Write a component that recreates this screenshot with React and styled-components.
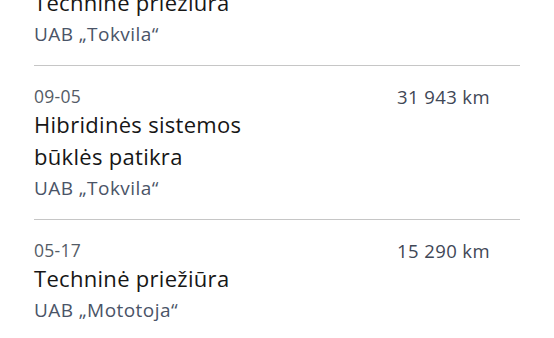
import React from "react";
import styled, { createGlobalStyle } from "styled-components";

const Global = createGlobalStyle`
  html, body { margin: 0; padding: 0; background: #ffffff; }
  body { font-family: "Open Sans", "Noto Sans", sans-serif; overflow: hidden; }
`;

const Page = styled.div`
  width: 554px;
  height: 338px;
  overflow: hidden;
  background: #fff;
`;

const List = styled.ul`
  list-style: none;
  margin: -56px 0 0 0;
  padding: 0 34px;
`;

const Item = styled.li`
  padding: 18px 0 17px;
  border-bottom: ${(p) => (p.$last ? "none" : "1.5px solid #c6c6c6")};
`;

const TopRow = styled.div`
  display: flex;
  justify-content: space-between;
  align-items: center;
  height: 24px;
  padding-right: 30px;
`;

const DateText = styled.span`
  font-size: 17.5px;
  color: #545b66;
  letter-spacing: 0.3px;
`;

const Km = styled.span`
  font-size: 18.5px;
  color: #3f4756;
  letter-spacing: 0.4px;
`;

const Title = styled.div`
  font-size: 22px;
  line-height: 32px;
  color: #161616;
  max-width: 260px;
  letter-spacing: 0.3px;
`;

const Provider = styled.div`
  margin-top: 2px;
  font-size: 19px;
  line-height: 28px;
  color: #4a5467;
  letter-spacing: 0.45px;
`;

const records = [
  { title: "Techninė priežiūra", provider: "UAB „Tokvila“" },
  { date: "09-05", km: "31 943 km", title: "Hibridinės sistemos būklės patikra", provider: "UAB „Tokvila“" },
  { date: "05-17", km: "15 290 km", title: "Techninė priežiūra", provider: "UAB „Mototoja“" },
];

export default function App() {
  return (
    <Page>
      <Global />
      <List>
        {records.map((r, i) => (
          <Item key={i} $last={i === records.length - 1}>
            <TopRow>
              {r.date && <DateText>{r.date}</DateText>}
              {r.km && <Km>{r.km}</Km>}
            </TopRow>
            <Title>{r.title}</Title>
            <Provider>{r.provider}</Provider>
          </Item>
        ))}
      </List>
    </Page>
  );
}
